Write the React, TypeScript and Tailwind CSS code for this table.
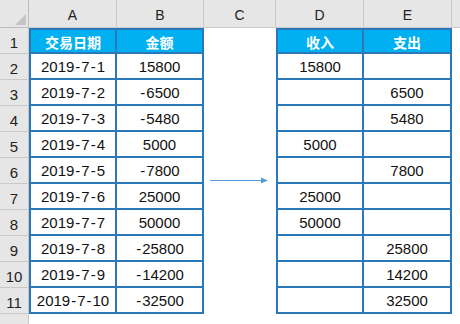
import React from 'react';

const LEFT_ROWS: [string, string][] = [
  ['2019-7-1', '15800'],
  ['2019-7-2', '-6500'],
  ['2019-7-3', '-5480'],
  ['2019-7-4', '5000'],
  ['2019-7-5', '-7800'],
  ['2019-7-6', '25000'],
  ['2019-7-7', '50000'],
  ['2019-7-8', '-25800'],
  ['2019-7-9', '-14200'],
  ['2019-7-10', '-32500'],
];

const RIGHT_ROWS: [string, string][] = [
  ['15800', ''],
  ['', '6500'],
  ['', '5480'],
  ['5000', ''],
  ['', '7800'],
  ['25000', ''],
  ['50000', ''],
  ['', '25800'],
  ['', '14200'],
  ['', '32500'],
];

const COLS = ['A', 'B', 'C', 'D', 'E'];

// the sheet's font draws a wide hyphen, so pad it out
const Value = ({ text }: { text: string }) => {
  const parts = text.split('-');
  return (
    <span>
      {parts.map((p, i) => (
        <React.Fragment key={i}>
          {i > 0 && <span className="inline-block w-[7px] text-center">-</span>}
          {p}
        </React.Fragment>
      ))}
    </span>
  );
};

const blue = 'border-[#2a77b9]';

const TableCell = ({ text, first, top, head }: { text: string; first?: boolean; top?: boolean; head?: boolean }) => (
  <div
    className={`flex items-center justify-center pt-[2px] border-r-2 border-b-2 ${blue} ${first ? 'border-l-2' : ''} ${top ? 'border-t-2' : ''} ${
      head
        ? 'bg-[#00b0f0] text-white font-bold text-[14px] [font-family:"Noto_Sans_CJK_SC",sans-serif]'
        : 'bg-white text-[#111] text-[15px]'
    }`}
  >
    {head ? text : <Value text={text} />}
  </div>
);

export default function App() {
  const rows: React.ReactNode[] = [];

  for (let r = 1; r <= 11; r++) {
    const head = r === 1;
    const left = head ? ['交易日期', '金额'] : LEFT_ROWS[r - 2];
    const right = head ? ['收入', '支出'] : RIGHT_ROWS[r - 2];
    rows.push(
      <React.Fragment key={r}>
        <div className="flex items-end justify-center bg-[#e6e6e6] border-r border-b border-[#c9c9c9] text-[15px] leading-[20px] text-[#222]">
          {r}
        </div>
        <TableCell text={left[0]} first top={head} head={head} />
        <TableCell text={left[1]} top={head} head={head} />
        <div className="bg-white" />
        <TableCell text={right[0]} first top={head} head={head} />
        <TableCell text={right[1]} top={head} head={head} />
        <div className="bg-white" />
      </React.Fragment>
    );
  }

  return (
    <div className="relative w-[460px] h-[324px] overflow-hidden bg-white [font-family:'Liberation_Sans',Arial,sans-serif]">
      <div className="grid grid-cols-[29px_88px_87px_72px_88px_88px_8px] grid-rows-[28px_repeat(11,26px)_10px]">
        {/* corner */}
        <div className="relative bg-[#e6e6e6] border-r border-b border-[#bdbdbd]">
          <svg className="absolute left-0 top-0" width="29" height="28" viewBox="0 0 29 28">
            <polygon points="26,14 26,25 15,25" fill="#c4c4c4" />
          </svg>
        </div>
        {COLS.map((c) => (
          <div
            key={c}
            className="flex items-end justify-center pb-[1px] bg-[#e6e6e6] border-r border-b border-[#c9c9c9] text-[14px] text-[#222]"
          >
            {c}
          </div>
        ))}
        <div className="bg-[#e6e6e6] border-b border-[#c9c9c9]" />

        {rows}

        <div className="bg-[#e6e6e6] border-r border-[#c9c9c9]" />
        <div className="col-span-6 bg-white" />
      </div>

      {/* arrow between the two tables */}
      <svg className="absolute left-[209px] top-[176px]" width="62" height="9" viewBox="0 0 62 9">
        <line x1="1" y1="4.5" x2="53" y2="4.5" stroke="#5b9bd5" strokeWidth="1" />
        <polygon points="52,1.5 59,4.5 52,7.5" fill="#5b9bd5" />
      </svg>
    </div>
  );
}
